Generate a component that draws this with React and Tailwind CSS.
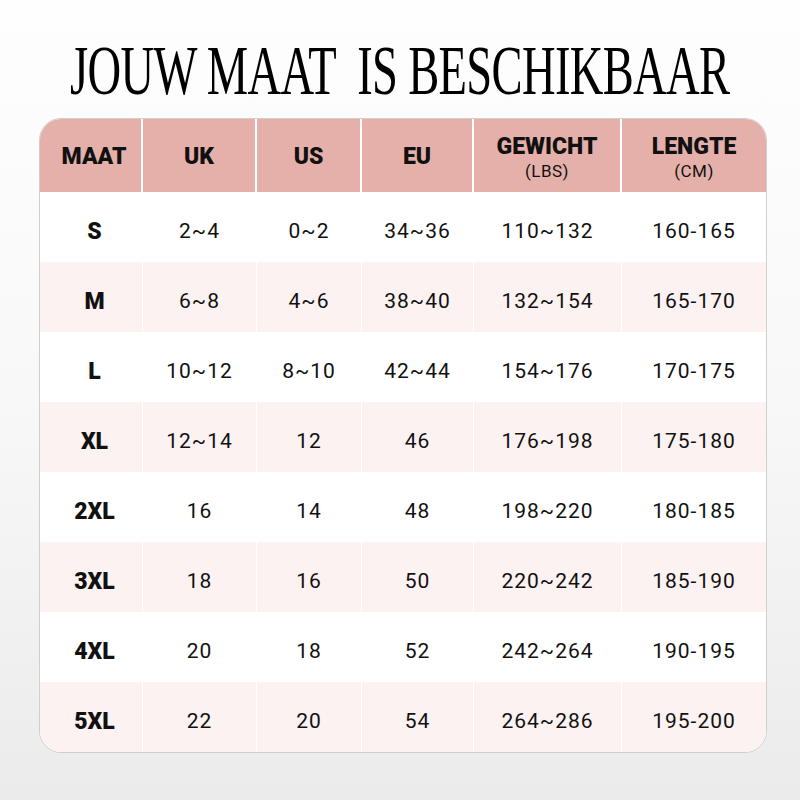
import React from 'react';

const rows = [
  ['S', '2~4', '0~2', '34~36', '110~132', '160-165'],
  ['M', '6~8', '4~6', '38~40', '132~154', '165-170'],
  ['L', '10~12', '8~10', '42~44', '154~176', '170-175'],
  ['XL', '12~14', '12', '46', '176~198', '175-180'],
  ['2XL', '16', '14', '48', '198~220', '180-185'],
  ['3XL', '18', '16', '50', '220~242', '185-190'],
  ['4XL', '20', '18', '52', '242~264', '190-195'],
  ['5XL', '22', '20', '54', '264~286', '195-200'],
];

const cols = 'grid grid-cols-[103px_114px_105px_112px_148px_144px]';

function App() {
  return (
    <div className="w-[800px] h-[800px] bg-gradient-to-b from-[#fefefe] via-[#f8f8f8] to-[#ebebeb] flex flex-col items-center font-['Roboto',sans-serif] text-[#111]">
      <div className="h-[118px] w-full flex items-center justify-center">
        <h1 className="font-['Liberation_Serif',serif] text-[70px] leading-none whitespace-pre scale-x-[0.665] tracking-[-1px] text-black mt-[23px]">
          JOUW MAAT  IS BESCHIKBAAR
        </h1>
      </div>

      <div className="ml-[6px] w-[728px] rounded-[22px] border border-[#cfcfcf] overflow-hidden bg-white">
        <div className={`${cols} h-[73px] bg-[#e6b0aa] divide-x-2 divide-white`}>
          {['MAAT', 'UK', 'US', 'EU'].map((h, i) => (
            <div key={h} className={`flex items-center justify-center pt-[4px] text-[23px] font-black ${i === 0 ? 'pl-[7px]' : ''}`}>{h}</div>
          ))}
          <div className="flex flex-col items-center justify-center pt-[4px] leading-tight">
            <span className="text-[23px] font-black">GEWICHT</span>
            <span className="text-[17px] tracking-[0.5px]">(LBS)</span>
          </div>
          <div className="flex flex-col items-center justify-center pt-[4px] leading-tight">
            <span className="text-[23px] font-black">LENGTE</span>
            <span className="text-[17px] tracking-[0.5px]">(CM)</span>
          </div>
        </div>

        {rows.map((r, i) => (
          <div key={r[0]} className={`${cols} h-[70px] divide-x divide-white ${i % 2 ? 'bg-[#fcf2f1]' : 'bg-white'}`}>
            {r.map((c, j) => (
              <div key={j} className={`flex items-center justify-center pt-[10px] ${j === 0 ? 'text-[23px] font-black pl-[7px]' : 'text-[21px] tracking-[1px]'}`}>
                {c}
              </div>
            ))}
          </div>
        ))}
      </div>
    </div>
  );
}

export default App;
